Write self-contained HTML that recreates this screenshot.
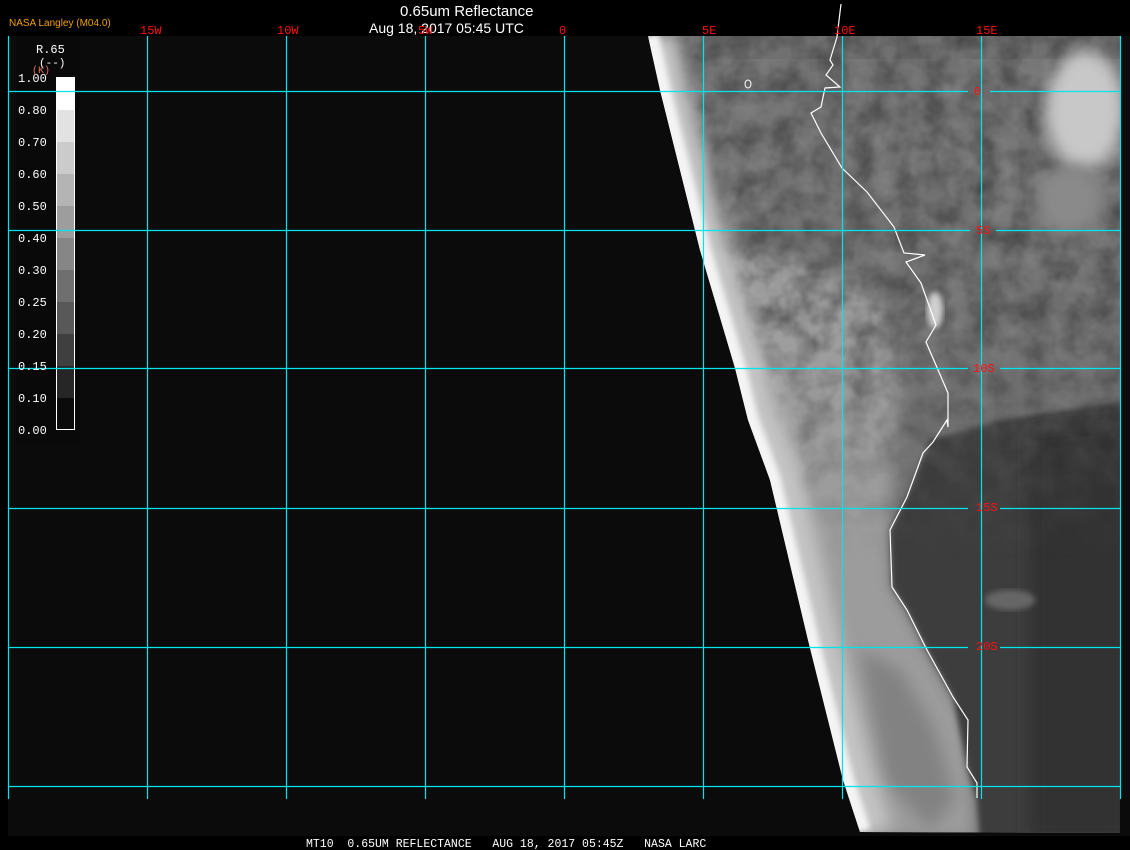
<!DOCTYPE html>
<html><head><meta charset="utf-8"><style>
html,body{margin:0;padding:0;background:#000;width:1130px;height:850px;overflow:hidden}
svg{display:block}
</style></head><body>
<svg width="1130" height="850" viewBox="0 0 1130 850" xmlns="http://www.w3.org/2000/svg" font-family="Liberation Sans, sans-serif">
<defs>
<filter id="tex" x="0" y="0" width="100%" height="100%">
<feTurbulence type="fractalNoise" baseFrequency="0.04" numOctaves="3" seed="4" result="n"/>
<feColorMatrix in="n" type="matrix" values="0 0 0 0 0  0 0 0 0 0  0 0 0 0 0  0 0 0 1.8 -0.6" result="a"/>
<feComposite in="SourceGraphic" in2="a" operator="in"/>
</filter>
<filter id="bl" x="-20%" y="-20%" width="140%" height="140%"><feGaussianBlur stdDeviation="8"/></filter>
<filter id="bl2"><feGaussianBlur stdDeviation="3"/></filter>
<linearGradient id="fade" x1="0" y1="0" x2="0" y2="1" gradientUnits="userSpaceOnUse" x2a="0">
<stop offset="0" stop-color="#fff"/>
</linearGradient>
<linearGradient id="fg" gradientUnits="userSpaceOnUse" x1="0" y1="36" x2="0" y2="560">
<stop offset="0" stop-color="#fff"/><stop offset="0.55" stop-color="#fff"/><stop offset="1" stop-color="#000"/>
</linearGradient>
<mask id="m"><rect x="600" y="0" width="530" height="850" fill="url(#fg)"/></mask>
<clipPath id="sat"><polygon points="648,36 660,90 695,230 700,250 735,368 748,420 770,480 808,640 843,780 860,832 1120,833 1120,36"/></clipPath>
</defs>
<rect x="0" y="0" width="1130" height="850" fill="#000"/>
<rect x="8" y="36" width="1122" height="800" fill="#0b0b0b"/>
<g clip-path="url(#sat)">
<rect x="640" y="36" width="490" height="800" fill="#707070"/>
<!-- ocean lower lighter -->
<polygon points="700,250 800,260 880,300 900,400 893,470 890,530 892,587 907,610 927,650 953,697 968,720 977,840 860,840 843,780 808,640 770,480 748,420 735,368" fill="#9c9c9c" filter="url(#bl)"/>
<polygon points="860,650 900,670 935,730 955,800 930,830 885,780" fill="#828282" filter="url(#bl)"/>
<!-- east land mid -->
<polygon points="910,250 1130,240 1130,400 1000,420 948,420 940,330" fill="#6e6e6e" filter="url(#bl)"/>
<!-- east land darker lower -->
<polygon points="930,440 1000,420 1130,400 1130,840 980,840 977,800 967,767 953,697 927,650 907,610 892,587 890,530 907,497" fill="#3c3c3c" filter="url(#bl2)"/>
<polygon points="1030,430 1130,420 1130,840 1030,840" fill="#333" filter="url(#bl)"/>
<ellipse cx="1010" cy="600" rx="25" ry="10" fill="#666" filter="url(#bl2)"/>
<!-- top mottles -->
<g mask="url(#m)">
<rect x="640" y="36" width="490" height="560" fill="#3a3a3a" filter="url(#tex)" opacity="0.75"/>
<rect x="640" y="36" width="490" height="560" fill="#a8a8a8" filter="url(#tex)" opacity="0.3" transform="translate(17,23)"/>
</g>
<!-- top right clouds -->
<ellipse cx="1085" cy="110" rx="40" ry="60" fill="#c8c8c8" filter="url(#bl)"/>
<ellipse cx="1070" cy="200" rx="35" ry="35" fill="#8a8a8a" filter="url(#bl)"/>
<ellipse cx="935" cy="310" rx="8" ry="18" fill="#cfcfcf" filter="url(#bl2)"/>
<!-- bright edge along limb -->
<polyline points="660,36 672,90 707,230 712,250 750,368 764,420 786,480 822,640 858,780 876,832" fill="none" stroke="#c4c4c4" stroke-width="34" filter="url(#bl)"/>
<polyline points="648,36 660,90 695,230 700,250 735,368 748,420 770,480 808,640 843,780 860,832" fill="none" stroke="#f4f4f4" stroke-width="22" filter="url(#bl2)"/>
</g>
<!-- coastline -->
<polyline fill="none" stroke="#fff" stroke-width="1.2" points="841,4 837,37 830,60 833,65 826,75 840,87 825,88 821,107 811,113 821,133 842,168 867,192 894,227 904,253 925,255 906,262 921,283 936,325 926,342 948,393 948,427 947,420 933,442 923,453 907,497 890,530 892,587 907,610 927,650 953,697 968,720 967,767 977,783 977,798"/>
<ellipse cx="748" cy="84" rx="3" ry="4" fill="none" stroke="#fff" stroke-width="1"/>
<!-- legend -->
<rect x="16" y="37" width="64" height="406" fill="#090909"/>
<g>
<rect x="56" y="77" width="19" height="33" fill="#fff"/>
<rect x="56" y="110" width="19" height="32" fill="#e2e2e2"/>
<rect x="56" y="142" width="19" height="32" fill="#cbcbcb"/>
<rect x="56" y="174" width="19" height="32" fill="#b4b4b4"/>
<rect x="56" y="206" width="19" height="32" fill="#9d9d9d"/>
<rect x="56" y="238" width="19" height="32" fill="#868686"/>
<rect x="56" y="270" width="19" height="32" fill="#6f6f6f"/>
<rect x="56" y="302" width="19" height="32" fill="#585858"/>
<rect x="56" y="334" width="19" height="32" fill="#3f3f3f"/>
<rect x="56" y="366" width="19" height="32" fill="#262626"/>
<rect x="56" y="398" width="19" height="32" fill="#0b0b0b"/>
<rect x="56.5" y="77.5" width="18" height="352" fill="none" stroke="#fff" stroke-width="1"/>
</g>
<!-- grid -->
<g stroke="#00e5ee" stroke-width="1.2">
<line x1="8.5" y1="36" x2="8.5" y2="799"/>
<line x1="147.5" y1="36" x2="147.5" y2="799"/>
<line x1="286.5" y1="36" x2="286.5" y2="799"/>
<line x1="425.5" y1="36" x2="425.5" y2="799"/>
<line x1="564.5" y1="36" x2="564.5" y2="799"/>
<line x1="703.5" y1="36" x2="703.5" y2="799"/>
<line x1="842.5" y1="36" x2="842.5" y2="799"/>
<line x1="981.5" y1="36" x2="981.5" y2="799"/>
<line x1="1120.5" y1="36" x2="1120.5" y2="799"/>
<line x1="8" y1="91.5" x2="968" y2="91.5"/><line x1="990" y1="91.5" x2="1121" y2="91.5"/>
<line x1="8" y1="230.5" x2="970" y2="230.5"/><line x1="996" y1="230.5" x2="1121" y2="230.5"/>
<line x1="8" y1="368.5" x2="968" y2="368.5"/><line x1="1000" y1="368.5" x2="1121" y2="368.5"/>
<line x1="8" y1="508.5" x2="968" y2="508.5"/><line x1="1000" y1="508.5" x2="1121" y2="508.5"/>
<line x1="8" y1="647.5" x2="968" y2="647.5"/><line x1="1000" y1="647.5" x2="1121" y2="647.5"/>
<line x1="8" y1="786.5" x2="1121" y2="786.5"/>
</g>
<g fill="#fff" font-family="Liberation Mono, monospace" font-size="12">
<text x="36" y="53">R.65</text>
<text x="39" y="66" font-size="11">(--)</text>
<text x="18" y="82">1.00</text>
<text x="18" y="114">0.80</text>
<text x="18" y="146">0.70</text>
<text x="18" y="178">0.60</text>
<text x="18" y="210">0.50</text>
<text x="18" y="242">0.40</text>
<text x="18" y="274">0.30</text>
<text x="18" y="306">0.25</text>
<text x="18" y="338">0.20</text>
<text x="18" y="370">0.15</text>
<text x="18" y="402">0.10</text>
<text x="18" y="434">0.00</text>
</g>
<text x="32" y="73" fill="#e07060" font-size="10" font-family="Liberation Mono, monospace">(K)</text>
<!-- titles -->
<text x="9" y="26" fill="#f0a000" font-size="10">NASA Langley (M04.0)</text>
<text x="400" y="16" fill="#fff" font-size="15">0.65um Reflectance</text>
<text x="369" y="33" fill="#fff" font-size="14">Aug 18, 2017 05:45 UTC</text>
<g fill="#ff1010" font-family="Liberation Mono, monospace" font-size="12">
<text x="140" y="34">15W</text>
<text x="277" y="34">10W</text>
<text x="418" y="34">5W</text>
<text x="559" y="34">0</text>
<text x="702" y="34">5E</text>
<text x="834" y="34">10E</text>
<text x="976" y="34">15E</text>
<text x="974" y="95">0</text>
<text x="976" y="234">5S</text>
<text x="973" y="372">10S</text>
<text x="976" y="511">15S</text>
<text x="976" y="650">20S</text>
</g>
<text x="306" y="847" fill="#fff" font-family="Liberation Mono, monospace" font-size="11.5" xml:space="preserve">MT10  0.65UM REFLECTANCE   AUG 18, 2017 05:45Z   NASA LARC</text>
</svg>
</body></html>
